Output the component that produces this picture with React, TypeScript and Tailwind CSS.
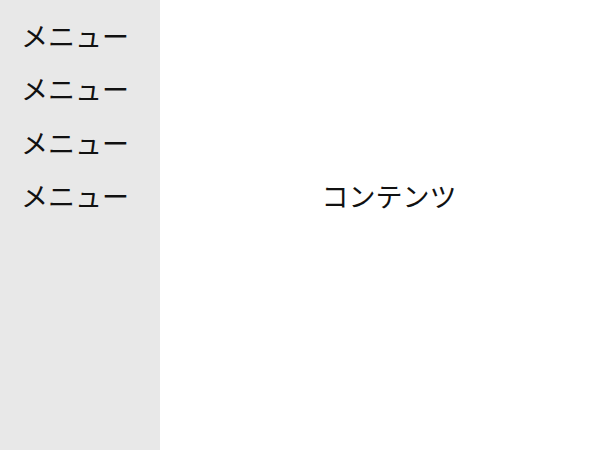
export default function App() {
  const items = ['メニュー', 'メニュー', 'メニュー', 'メニュー'];
  return (
    <div
      className="flex h-[450px] w-[600px] text-[27px] text-[#111]"
      style={{ fontFamily: '"Noto Sans CJK JP", sans-serif' }}
    >
      <nav className="w-[160px] shrink-0 bg-[#e8e8e8] pt-[9px] pl-[21px]">
        <ul>
          {items.map((label, i) => (
            <li key={i} className="flex h-[53.5px] items-center">
              {label}
            </li>
          ))}
        </ul>
      </nav>
      <main className="flex flex-1 justify-center bg-white pt-[169px] pl-[18px]">
        <p className="h-[54px] leading-[54px]">コンテンツ</p>
      </main>
    </div>
  );
}
